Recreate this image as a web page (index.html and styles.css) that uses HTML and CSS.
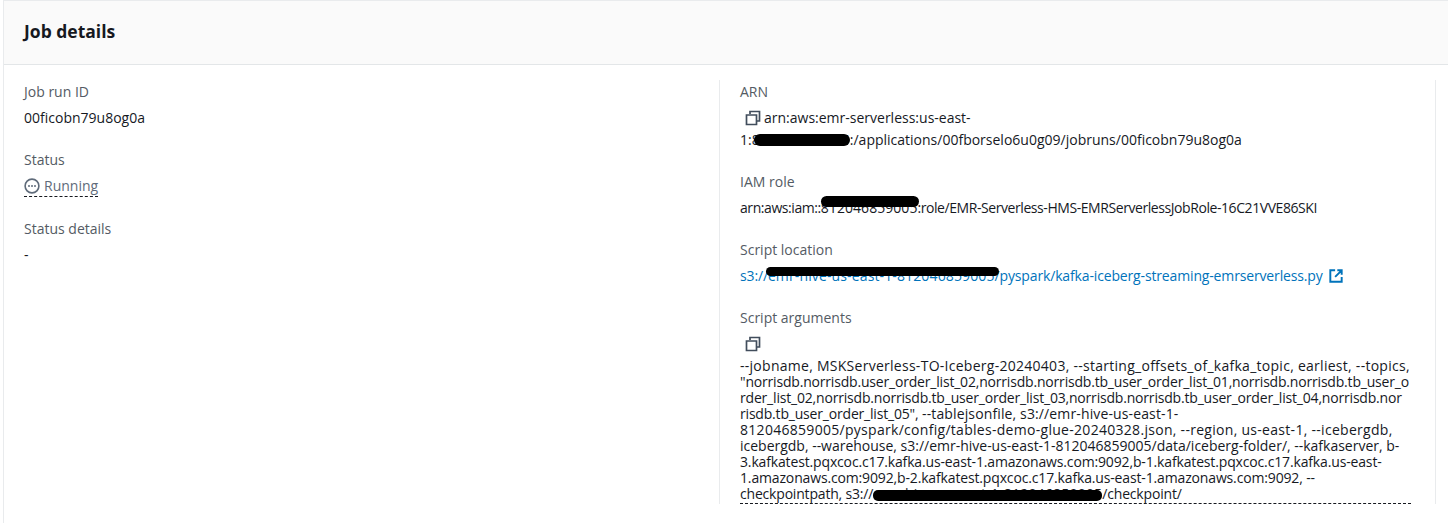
FILE: index.html
```html
<!DOCTYPE html>
<html lang="en">
<head>
<meta charset="utf-8">
<title>Job details</title>
<link rel="stylesheet" href="styles.css">
</head>
<body>
<section class="card">
  <header class="card-head"><h2>Job details</h2></header>
  <div class="card-body">
    <div class="col col-left">
      <div class="field">
        <div class="label">Job run ID</div>
        <div class="value">00ficobn79u8og0a</div>
      </div>
      <div class="field">
        <div class="label">Status</div>
        <div class="value status">
          <span class="status-inner">
            <svg class="ico" viewBox="0 0 16 16" width="16" height="16"><circle cx="8" cy="8" r="6.9" fill="none" stroke="#5f6b7a" stroke-width="1.6"/><circle cx="5" cy="8" r="1" fill="#5f6b7a"/><circle cx="8" cy="8" r="1" fill="#5f6b7a"/><circle cx="11" cy="8" r="1" fill="#5f6b7a"/></svg>
            Running
          </span>
        </div>
      </div>
      <div class="field">
        <div class="label">Status details</div>
        <div class="value">-</div>
      </div>
    </div>
    <div class="col col-right">
      <div class="field field-arn">
        <div class="label">ARN</div>
        <div class="value arn">
          <svg class="ico copy copy-inline" viewBox="0 0 16 16" width="16" height="16"><path d="M5 4V1.5h9.5V11H12M1.5 5h10v9.5h-10z" fill="none" stroke="#414d5c" stroke-width="1.7"/></svg>arn:aws:emr-serverless:us-east-<br>
          1:<span class="redact r-arn">812046859005</span>:/applications/00fborselo6u0g09/jobruns/00ficobn79u8og0a
        </div>
      </div>
      <div class="field">
        <div class="label">IAM role</div>
        <div class="value role">arn:aws:iam::<span class="redact r-iam">812046859005</span>:role/EMR-Serverless-HMS-EMRServerlessJobRole-16C21VVE86SKI</div>
      </div>
      <div class="field">
        <div class="label">Script location</div>
        <div class="value"><a class="link" href="#">s3://<span class="redact r-s3">emr-hive-us-east-1-812046859005</span>/pyspark/kafka-iceberg-streaming-emrserverless.py<svg class="ico ext" viewBox="0 0 16 16" width="14" height="14"><path d="M7 1.5H1.5v13h13V9M9.5 1.5h5v5M14.5 1.5L7 9" fill="none" stroke="#0073bb" stroke-width="2.2"/></svg></a></div>
      </div>
      <div class="field">
        <div class="label">Script arguments</div>
        <div class="copy-row"><svg class="ico copy" viewBox="0 0 16 16" width="16" height="16"><path d="M5 4V1.5h9.5V11H12M1.5 5h10v9.5h-10z" fill="none" stroke="#414d5c" stroke-width="1.7"/></svg></div>
        <div class="args"><span class="ln l1">--jobname, MSKServerless-TO-Iceberg-20240403, --starting_offsets_of_kafka_topic, earliest, --topics,</span><br><span class="ln l2">"norrisdb.norrisdb.user_order_list_02,norrisdb.norrisdb.tb_user_order_list_01,norrisdb.norrisdb.tb_user_o</span><br><span class="ln l2">rder_list_02,norrisdb.norrisdb.tb_user_order_list_03,norrisdb.norrisdb.tb_user_order_list_04,norrisdb.nor</span><br><span class="ln l2">risdb.tb_user_order_list_05",</span> <span class="ln l4">--tablejsonfile, s3://emr-hive-us-east-1-</span><br><span class="ln l5">812046859005/pyspark/config/tables-demo-glue-20240328.json, --region, us-east-1, --icebergdb,</span><br><span class="ln l6">icebergdb, --warehouse, s3://emr-hive-us-east-1-812046859005/data/iceberg-folder/, --kafkaserver, b-</span><br><span class="ln l7">3.kafkatest.pqxcoc.c17.kafka.us-east-1.amazonaws.com:9092,b-1.kafkatest.pqxcoc.c17.kafka.us-east-</span><br><span class="ln l7">1.amazonaws.com:9092,b-2.kafkatest.pqxcoc.c17.kafka.us-east-1.amazonaws.com:9092, --</span><br><span class="ln l2">checkpointpath, s3://</span><span class="ln redact r-ck">emr-hive-us-east-1-812046859005</span><span class="ln l2">/checkpoint/</span></div>
      </div>
    </div>
  </div>
</section>
</body>
</html>
```
FILE: styles.css
```css
* { box-sizing: border-box; }
html, body { margin: 0; padding: 0; background: #fff; }
body {
  font-family: "Open Sans", "Noto Sans", "Liberation Sans", sans-serif;
  font-size: 14px;
  color: #16191f;
  height: 523px;
  overflow: hidden;
}
.card {
  margin-left: 3px;
  border-top: 1px solid #e9ebed;
  border-left: 1px solid #e9ebed;
  height: 523px;
}
.card-head {
  height: 64px;
  background: #fafafa;
  border-bottom: 1px solid #e3e6e8;
  padding: 19px 20px 0;
}
.card-head h2 {
  margin: 0;
  font-size: 17.5px;
  line-height: 22px;
  font-weight: 700;
  color: #16191f;
}
.card-body {
  display: grid;
  grid-template-columns: 695px 717px;
  padding: 15px 0 0 20px;
}
.col { height: 424px; padding-top: 2px; }
.col-right {
  border-left: 1px solid #e9ebed;
  border-right: 1px solid #e9ebed;
  padding-left: 20px;
}
.field { margin-bottom: 22px; }
.field-arn { margin-bottom: 21px; }
.label {
  line-height: 20px;
  margin-bottom: 6px;
  color: #545b64;
}
.value { line-height: 20px; white-space: nowrap; }
.arn { line-height: 22px; margin-top: -1px; }
.role { letter-spacing: -0.43px; }
.status { color: #5f6b7a; height: 21px; display: flex; }
.status-inner {
  display: inline-flex;
  align-items: center;
  gap: 4px;
  border-bottom: 1px dashed #16191f;
  height: 22px;
  margin-top: -1px;
}
.ico { flex: none; }
.copy-inline { vertical-align: -3px; margin: 0 3px 0 5px; }
.copy-row { height: 22px; padding: 2px 0 0 5px; }
.link { color: #0073bb; text-decoration: none; letter-spacing: -0.15px; }
.ext { vertical-align: -2px; margin-left: 6px; }
.args {
  line-height: 16px;
  white-space: nowrap;
  width: 671px;
  border-bottom: 1px dashed #16191f;
  padding-bottom: 1px;
  margin-top: 2px;
}
.ln { display: inline-block; line-height: 16px; height: 16px; vertical-align: top; }
.l1 { letter-spacing: 0.27px; }
.l2 { letter-spacing: -0.19px; }
.l4 { letter-spacing: 0.13px; }
.l5 { letter-spacing: 0.29px; }
.l6 { letter-spacing: -0.01px; }
.l7 { letter-spacing: -0.15px; }
.redact { position: relative; }
.redact::after {
  content: "";
  position: absolute;
  background: #000;
}
.r-arn { letter-spacing: 0.17px; }
.r-arn::after { left: 2px; right: 0; top: 4px; height: 12px; border-radius: 6px; }
.r-iam { letter-spacing: 0.05px; }
.r-iam::after { left: 0; right: -2px; top: -2px; height: 11px; border-radius: 6px; }
.r-s3 { letter-spacing: 0.13px; }
.r-s3::after { left: -2px; right: -4px; top: 1px; height: 9px; border-radius: 5px; }
.r-ck { letter-spacing: 0.21px; }
.r-ck::after { left: 0; right: 0; top: 4px; height: 11px; border-radius: 5px; }
```
